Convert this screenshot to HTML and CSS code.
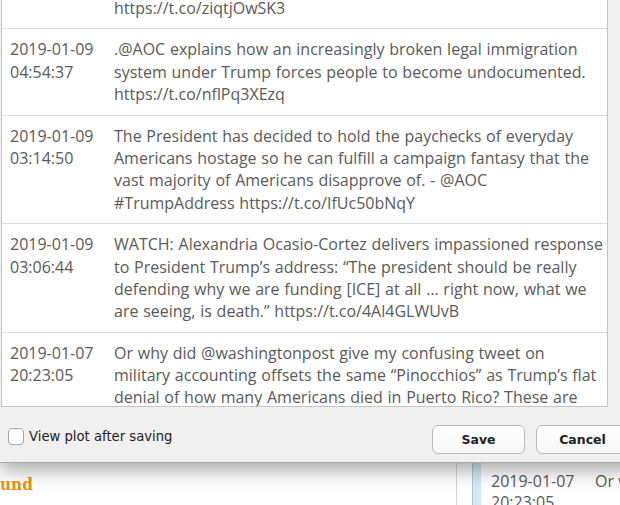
FILE: index.html
```html
<!DOCTYPE html>
<html lang="en">
<head>
<meta charset="utf-8">
<title>Save tweets</title>
<link rel="stylesheet" href="styles.css">
</head>
<body>
<div class="dialog">
  <div class="list">
    <div class="rows">
      <div class="row">
        <div class="date"></div>
        <div class="text">https://t.co/ziqtjOwSK3</div>
      </div>
      <div class="row">
        <div class="date"><span>2019-01-09</span><span>04:54:37</span></div>
        <div class="text">.@AOC explains how an increasingly broken legal immigration system under Trump forces people to become undocumented. https://t.co/nflPq3XEzq</div>
      </div>
      <div class="row">
        <div class="date"><span>2019-01-09</span><span>03:14:50</span></div>
        <div class="text">The President has decided to hold the paychecks of everyday Americans hostage so he can fulfill a campaign fantasy that the vast majority of Americans disapprove of. - @AOC #TrumpAddress https://t.co/IfUc50bNqY</div>
      </div>
      <div class="row">
        <div class="date"><span>2019-01-09</span><span>03:06:44</span></div>
        <div class="text">WATCH: Alexandria Ocasio-Cortez delivers impassioned response to President Trump’s address: “The president should be really defending why we are funding [ICE] at all … right now, what we are seeing, is death.” https://t.co/4Al4GLWUvB</div>
      </div>
      <div class="row">
        <div class="date"><span>2019-01-07</span><span>20:23:05</span></div>
        <div class="text">Or why did @washingtonpost give my confusing tweet on military accounting offsets the same “Pinocchios” as Trump’s flat denial of how many Americans died in Puerto Rico? These are</div>
      </div>
    </div>
  </div>
  <div class="footer">
    <label class="check"><span class="box"></span><span class="check-label">View plot after saving</span></label>
    <div class="buttons">
      <button class="btn" type="button">Save</button>
      <button class="btn" type="button">Cancel</button>
    </div>
  </div>
</div>
<div class="app">
  <div class="app-left"><span class="heading">und</span></div>
  <div class="app-right">
    <div class="bar"></div>
    <div class="entry">
      <div class="date"><span>2019-01-07</span><span>20:23:05</span></div>
      <div class="text">Or why did @washingtonpost give my confusing tweet on military accounting offsets</div>
    </div>
  </div>
</div>
</body>
</html>
```
FILE: styles.css
```css
html, body {
  margin: 0;
  padding: 0;
  overflow: hidden;
  background: #ffffff;
}
body {
  width: 620px;
  height: 505px;
  font-family: "Open Sans", "DejaVu Sans", sans-serif;
}
.dialog {
  position: relative;
  z-index: 1;
  width: 640px;
  background: #f0f0f0;
  border-bottom: 1px solid #a9a9a9;
  box-shadow: 0 6px 20px rgba(0, 0, 0, 0.38);
}
.list {
  width: 605px;
  height: 406px;
  margin-left: 1px;
  overflow: hidden;
  background: #ffffff;
  border: 1px solid #c4c4c4;
  border-top: 0;
}
.rows {
  margin-top: -12px;
}
.row {
  display: grid;
  grid-template-columns: 104px 1fr;
  padding: 9px 3px 9px 8px;
  border-bottom: 1px solid #dcdcdc;
  font-size: 16px;
  line-height: 1.4;
  color: #5a5a5a;
}
.row .text {
  word-spacing: 0.6px;
}
.date span {
  display: block;
}
.footer {
  height: 55px;
  display: flex;
  align-items: flex-start;
  padding-left: 8px;
  padding-right: 11px;
}
.check {
  display: flex;
  align-items: center;
  margin-top: 21px;
  font-family: "DejaVu Sans", sans-serif;
  font-size: 13.2px;
  color: #1e1e1e;
}
.box {
  width: 14px;
  height: 15px;
  border: 1px solid #a5a5a5;
  border-radius: 4px;
  background: #ffffff;
  margin-right: 5px;
}
.buttons {
  margin-left: auto;
  margin-top: 18px;
  display: flex;
  gap: 11px;
}
.btn {
  width: 93px;
  height: 29px;
  padding: 0;
  border: 1px solid #b9b9b9;
  border-radius: 6px;
  background: linear-gradient(#ffffff, #f7f7f7);
  font-family: "DejaVu Sans", sans-serif;
  font-weight: bold;
  font-size: 12.5px;
  color: #222222;
}
.app {
  display: flex;
  height: 42px;
}
.app-left {
  flex: none;
  width: 456px;
  padding-top: 10px;
}
.heading {
  font-family: "DejaVu Serif Condensed", "DejaVu Serif", serif;
  font-stretch: condensed;
  font-weight: bold;
  font-size: 17px;
  color: #e8920e;
}
.app-right {
  flex: 1;
  min-width: 0;
  display: flex;
  border-left: 1px solid #d6d6d6;
  padding-left: 15px;
  overflow: hidden;
}
.bar {
  flex: none;
  width: 8px;
  background: #d5eaf5;
  border-left: 1px solid #a9c7d7;
}
.entry {
  display: grid;
  grid-template-columns: 104px 1fr;
  padding: 8px 0 0 10px;
  font-size: 16px;
  line-height: 21px;
  color: #5a5a5a;
  white-space: nowrap;
}
```
